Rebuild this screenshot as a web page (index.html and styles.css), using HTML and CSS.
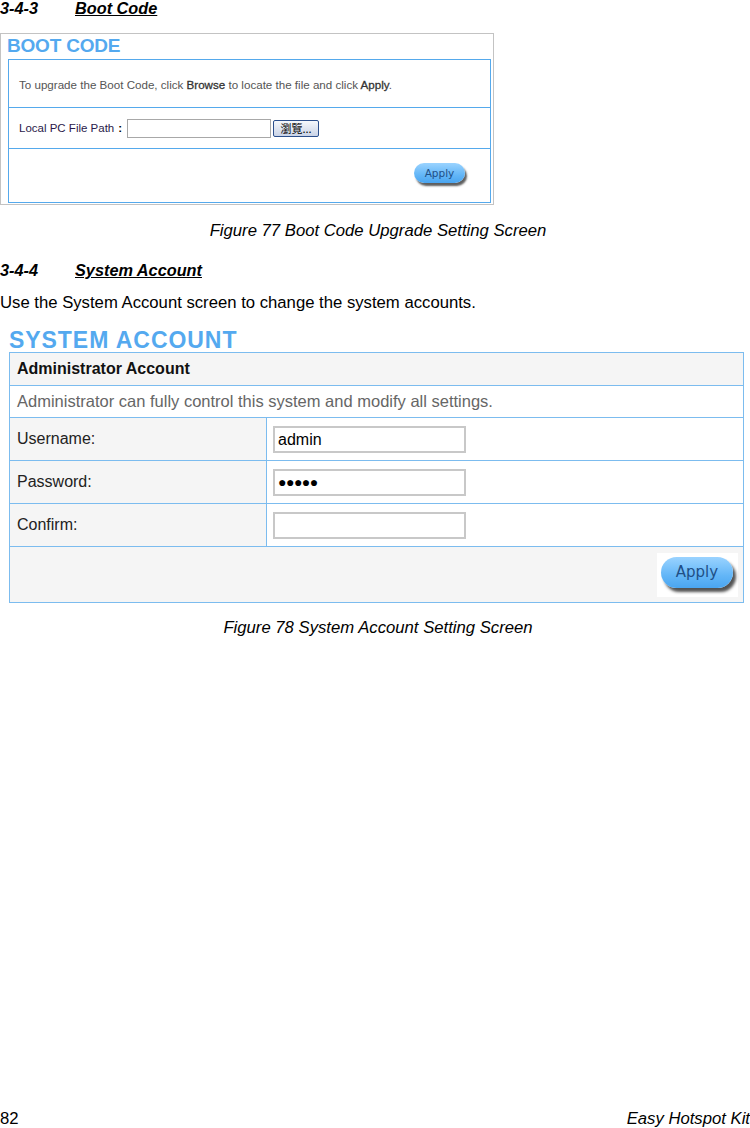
FILE: index.html
```html
<!DOCTYPE html>
<html>
<head>
<meta charset="utf-8">
<link rel="stylesheet" href="styles.css">
</head>
<body>
<div class="page">
  <h3 class="sec"><span class="num">3-4-3</span><span class="ttl">Boot Code</span></h3>

  <div class="boot">
    <div class="boot-title">BOOT CODE</div>
    <div class="boot-box">
      <div class="boot-row r1"><span>To upgrade the Boot Code, click <b>Browse</b> to locate the file and click <b>Apply</b>.</span></div>
      <div class="boot-row r2">
        <span class="lbl">Local PC File Path</span><span class="colon">:</span>
        <span class="file-in"></span>
        <span class="browse">瀏覽...</span>
      </div>
      <div class="boot-row r3"><span class="pill small">Apply</span></div>
    </div>
  </div>

  <p class="cap cap1">Figure 77 Boot Code Upgrade Setting Screen</p>

  <h3 class="sec sec2"><span class="num">3-4-4</span><span class="ttl">System Account</span></h3>
  <p class="para">Use the System Account screen to change the system accounts.</p>

  <div class="sys">
    <div class="sys-title">SYSTEM ACCOUNT</div>
    <table class="sys-tab">
      <tr class="h"><td colspan="2">Administrator Account</td></tr>
      <tr class="d"><td colspan="2">Administrator can fully control this system and modify all settings.</td></tr>
      <tr class="f"><td class="k">Username:</td><td class="v"><span class="in">admin</span></td></tr>
      <tr class="f"><td class="k">Password:</td><td class="v"><span class="in dots">●●●●●</span></td></tr>
      <tr class="f f3"><td class="k">Confirm:</td><td class="v"><span class="in"></span></td></tr>
      <tr class="a"><td colspan="2"><div class="abox"><span class="pill big">Apply</span></div></td></tr>
    </table>
  </div>

  <p class="cap cap2">Figure 78 System Account Setting Screen</p>

  <div class="spacer"></div>
  <div class="foot"><span>82</span><span class="kit">Easy Hotspot Kit</span></div>
</div>
</body>
</html>
```

FILE: styles.css
```css
html, body { margin: 0; padding: 0; background: #fff; }
body { font-family: "Liberation Sans", Arial, sans-serif; color: #000; }
.page { width: 750px; height: 1128px; display: flex; flex-direction: column; }

.sec { margin: 0; height: 16px; font-size: 16.3px; line-height: 16px; font-style: italic; font-weight: bold; display: flex; }
.sec .num { width: 75px; }
.sec .ttl { text-decoration: underline; }
.sec2 { margin-top: 22px; }

.boot { margin-top: 17px; width: 492px; height: 170px; border: 1px solid #c3c3c3; }
.boot-title { height: 25px; padding-left: 6px; font-size: 19px; line-height: 24px; font-weight: bold; color: #54a9ef; letter-spacing: -0.2px; }
.boot-box { margin-left: 7px; width: 481px; border: 1px solid #55a9ec; display: flex; flex-direction: column; }
.boot-row { display: flex; align-items: center; padding-left: 10px; font-size: 11.6px; color: #555; }
.boot-row b { font-weight: normal; color: #333; -webkit-text-stroke: 0.3px #333; }
.r1 { height: 48px; border-bottom: 1px solid #55a9ec; padding-top: 1px; box-sizing: border-box; }
.r2 { height: 40px; border-bottom: 1px solid #55a9ec; font-size: 11.5px; color: #2a1a4a; }
.r2 .colon { margin-left: 4px; font-weight: bold; color: #000; }
.file-in { margin-left: 5px; width: 142px; height: 17px; border: 1px solid #a8a8a8; background: #fff; }
.browse { margin-left: 2px; width: 44px; height: 15px; border: 1px solid #2c4f8c; border-radius: 2px; background: linear-gradient(#f6f8fc, #c9d3e6); font-family: "Noto Sans CJK TC", "Liberation Sans", sans-serif; font-size: 11px; line-height: 15px; text-align: center; color: #000; }
.r3 { height: 53px; justify-content: flex-end; padding-right: 25px; }

.pill { display: inline-flex; align-items: center; justify-content: center; border-radius: 999px; background: linear-gradient(#9ad3ff, #63b6f7 60%, #4aa5f0); color: #1f4f86; box-shadow: 2px 3px 2px rgba(40,40,40,0.75); font-family: "DejaVu Sans", sans-serif; }
.pill.small { width: 51px; height: 20px; font-size: 10.5px; margin-top: -5px; }
.pill.big { width: 72px; height: 31px; font-size: 15px; box-shadow: 3px 4px 3px rgba(40,40,40,0.8); }

.cap { margin: 0; text-align: center; font-style: italic; font-size: 16.7px; line-height: 19px; }
.cap1 { margin-top: 16px; padding-left: 6px; }
.cap2 { margin-top: 15px; padding-left: 6px; }

.para { margin: 15px 0 0 0; font-size: 16.7px; line-height: 19px; }

.sys { margin-top: 15px; padding-left: 9px; }
.sys-title { height: 25px; font-size: 23px; line-height: 26px; font-weight: bold; color: #54a9ef; letter-spacing: 0.95px; }
.sys-tab { border-collapse: collapse; width: 735px; border: 1px solid #7cbcef; }
.sys-tab td { border: 1px solid #7cbcef; padding: 0 0 0 7px; font-size: 16px; color: #222; }
.h td { height: 32px; background: #f5f5f5; font-weight: bold; color: #111; }
.d td { height: 31px; background: #fff; color: #666; font-size: 16.5px; }
.f td { height: 42px; }
.f3 td { height: 42px; }
.k { width: 249px; background: #f5f5f5; }
.sys-tab td.v { background: #fff; padding-left: 6px; }
.in { display: block; width: 186px; height: 23px; border: 2px solid #c8c8c8; background: #fff; font-size: 16px; line-height: 23px; padding-left: 3px; color: #000; }
.dots { font-size: 14px; letter-spacing: -0.5px; }
.a td { height: 55px; background: #f5f5f5; padding: 0 5px 0 0; }
.abox { margin-left: auto; width: 81px; height: 44px; background: #fff; display: flex; align-items: flex-start; padding: 4px 0 0 4px; box-sizing: border-box; }

.spacer { flex: 1; }
.foot { display: flex; justify-content: space-between; font-size: 16.7px; line-height: 19px; }
.kit { font-style: italic; }
```
